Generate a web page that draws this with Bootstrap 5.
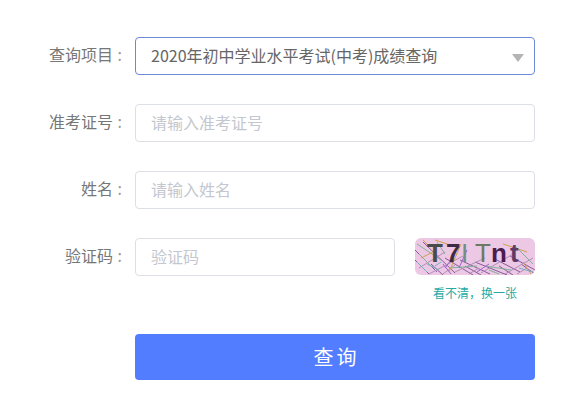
<!DOCTYPE html>
<html lang="zh-CN">
<head>
<meta charset="utf-8">
<title>查询</title>
<link rel="stylesheet" href="https://cdn.jsdelivr.net/npm/bootstrap@5.3.0/dist/css/bootstrap.min.css">
<style>
html,body{background:#fff;overflow:hidden}
body{font-family:"Noto Sans CJK SC","Liberation Sans",sans-serif;color:#666}
.qform{padding:37px 0 0 0;width:535px}
.qrow{margin-bottom:29px;height:38px}
.qlabel{width:135px;flex:none;padding-right:13px;font-size:16px;color:#777;text-align:right;line-height:35px;margin:0;white-space:nowrap}
.qlabel i{font-style:normal;display:inline-block;width:9px;text-align:right;color:#999}
.qform .form-control,.qform .form-select{height:38px;font-size:16px;padding:0 15px 3px;border:1px solid #dcdfe6;border-radius:4px;color:#666;box-shadow:none;font-family:inherit}
.qform .form-control::placeholder{color:#c4c7cf;opacity:1}
.qform .form-select{border-color:#6a8ad8;background-image:none}
.selwrap{width:400px;flex:none}
.selarrow{top:17px;right:11px;width:0;height:0;border-left:6px solid transparent;border-right:6px solid transparent;border-top:8px solid #b4b4b4;pointer-events:none}
.codeinput{width:260px;flex:none}
.codeside{width:120px;margin-left:20px;flex:none}
.codeimg{width:120px;height:37px;border-radius:6px;background:#ecc8e4;overflow:hidden;display:block}
.codelink{font-size:12px;color:#26aaa4;text-decoration:none;line-height:16px;margin-top:10px;text-align:center;display:block;white-space:nowrap}
.qbtnrow{margin-top:58px;padding-left:135px}
.qbtn{width:400px;height:46px;background:#527dff;border:0;border-radius:4px;color:#fff;font-size:20px;letter-spacing:3px;padding:0 0 0 3px;line-height:44px}
.qbtn:hover{background:#527dff;color:#fff}
.capt{font-family:"Liberation Sans",sans-serif;font-size:26px;font-weight:700}
.captthin{font-weight:400}
</style>
</head>
<body class="m-0">
<form class="qform">
  <div class="qrow d-flex">
    <label class="qlabel">查询项目<i>:</i></label>
    <div class="selwrap position-relative">
      <select class="form-select"><option>2020年初中学业水平考试(中考)成绩查询</option></select>
      <span class="selarrow position-absolute"></span>
    </div>
  </div>
  <div class="qrow d-flex">
    <label class="qlabel">准考证号<i>:</i></label>
    <input class="form-control selwrap" placeholder="请输入准考证号">
  </div>
  <div class="qrow d-flex">
    <label class="qlabel">姓名<i>:</i></label>
    <input class="form-control selwrap" placeholder="请输入姓名">
  </div>
  <div class="qrow d-flex mb-0">
    <label class="qlabel">验证码<i>:</i></label>
    <input class="form-control codeinput" placeholder="验证码">
    <div class="codeside">
      <svg class="codeimg" viewBox="0 0 120 37" xmlns="http://www.w3.org/2000/svg">
        <g fill="none" stroke-width="1">
          <path d="M0 12L22 34M8 4L40 35M30 20L58 37M45 22L75 36M60 24L92 37M78 20L105 34M95 18L120 32M0 22L14 36M16 26L28 37M50 28L66 37M84 28L98 37M106 26L120 36" stroke="#8a5a9c"/>
          <path d="M4 30L30 14M14 36L48 18M40 34L70 20M66 35L98 16M90 36L118 20M28 36L40 27M54 36L64 30M102 36L112 30" stroke="#b08fb8"/>
          <path d="M2 6L26 22M22 4L30 16M34 30L62 28M70 28L96 32M100 8L118 26M4 16L16 28M74 32L84 36" stroke="#7fb29a"/>
          <path d="M6 20L18 14M20 2L44 10M46 6L34 34M88 6L112 14M108 24L116 36M8 2L14 8" stroke="#d0a050"/>
          <path d="M28 26L36 36M52 12L44 30M74 26L62 34M36 22L30 30" stroke="#a060d0"/>
          <path d="M12 26L24 32M2 24L12 34M104 30L118 34M20 28L26 24" stroke="#70b0c0"/>
        </g>
        <text class="capt" x="12" y="24" fill="#4a4a48">T</text>
        <text class="capt" x="31" y="24" fill="#3d2b45">7</text>
        <text class="capt captthin" x="46" y="24" fill="#6f8f82">I</text>
        <text class="capt captthin" x="60" y="24" fill="#6a7a60">T</text>
        <text class="capt" x="76" y="24" fill="#4a1c50">n</text>
        <text class="capt" x="95" y="24" fill="#5c3a6a">t</text>
      </svg>
      <a class="codelink" href="#">看不清，换一张</a>
    </div>
  </div>
  <div class="qbtnrow">
    <button type="button" class="btn qbtn">查询</button>
  </div>
</form>
</body>
</html>
